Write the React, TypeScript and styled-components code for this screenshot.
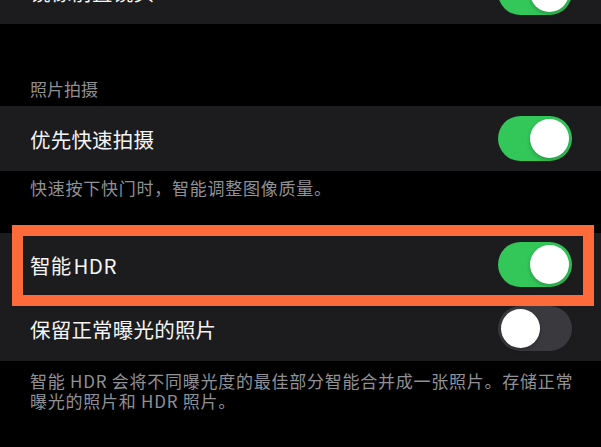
import React from "react";
import styled, { createGlobalStyle } from "styled-components";

const Global = createGlobalStyle`
  html, body { margin: 0; padding: 0; background: #000; }
  body { width: 601px; height: 447px; overflow: hidden; font-family: "Noto Sans CJK SC", "Noto Sans", sans-serif; }
`;

const Page = styled.div`
  width: 601px;
  height: 447px;
  overflow: hidden;
  background: #000;
  display: flex;
  flex-direction: column;
`;

const Group = styled.div<{ $first?: boolean }>`
  background: #1c1c1e;
  display: flex;
  flex-direction: column;
  margin-top: ${(p) => (p.$first ? "-40px" : "0")};
`;

const Row = styled.div<{ $tall?: boolean }>`
  position: relative;
  height: ${(p) => (p.$tall ? "65px" : "64px")};
  display: flex;
  align-items: center;
  justify-content: space-between;
  padding: 0 29px 0 30px;
`;

const Title = styled.span`
  color: #f4f4f4;
  font-size: 20.5px;
  line-height: 24px;
  letter-spacing: 0.2px;
`;

const Latin = styled.span`
  margin-left: 2px;
  letter-spacing: 0.5px;
`;

const Header = styled.div`
  color: #8f8f94;
  font-size: 17px;
  line-height: 22px;
  padding: 54px 30px 6px;
`;

const Note = styled.div<{ $top: number; $bottom: number }>`
  color: #909095;
  font-size: 17px;
  line-height: 20.5px;
  letter-spacing: 0.75px;
  padding: ${(p) => `${p.$top}px 26px ${p.$bottom}px 30px`};
`;

const Track = styled.div<{ $on: boolean }>`
  width: 74px;
  height: 45px;
  border-radius: 23px;
  background: ${(p) => (p.$on ? "#33c759" : "#3a3a3e")};
  display: flex;
  align-items: center;
  justify-content: ${(p) => (p.$on ? "flex-end" : "flex-start")};
  padding: 0 3px;
  box-sizing: border-box;
  flex-shrink: 0;
`;

const Knob = styled.div`
  width: 39px;
  height: 39px;
  border-radius: 50%;
  background: #fff;
  box-shadow: 0 2px 4px rgba(0, 0, 0, 0.25);
`;

const Highlight = styled.div`
  position: absolute;
  left: 12px;
  right: 7px;
  top: -8px;
  bottom: -9px;
  border: 11px solid #ff6a3a;
  pointer-events: none;
`;

const Toggle = ({ on }: { on: boolean }) => (
  <Track $on={on}>
    <Knob />
  </Track>
);

export default function App() {
  return (
    <>
      <Global />
      <Page>
        <Group $first>
          <Row>
            <Title>镜像前置镜头</Title>
            <Toggle on />
          </Row>
        </Group>
        <Header>照片拍摄</Header>
        <Group>
          <Row $tall>
            <Title>优先快速拍摄</Title>
            <Toggle on />
          </Row>
        </Group>
        <Note $top={7} $bottom={34}>快速按下快门时，智能调整图像质量。</Note>
        <Group>
          <Row>
            <Title>
              智能<Latin>HDR</Latin>
            </Title>
            <Toggle on />
            <Highlight />
          </Row>
          <Row>
            <Title>保留正常曝光的照片</Title>
            <Toggle on={false} />
          </Row>
        </Group>
        <Note $top={10} $bottom={0}>
          智能 HDR 会将不同曝光度的最佳部分智能合并成一张照片。存储正常曝光的照片和 HDR 照片。
        </Note>
      </Page>
    </>
  );
}
